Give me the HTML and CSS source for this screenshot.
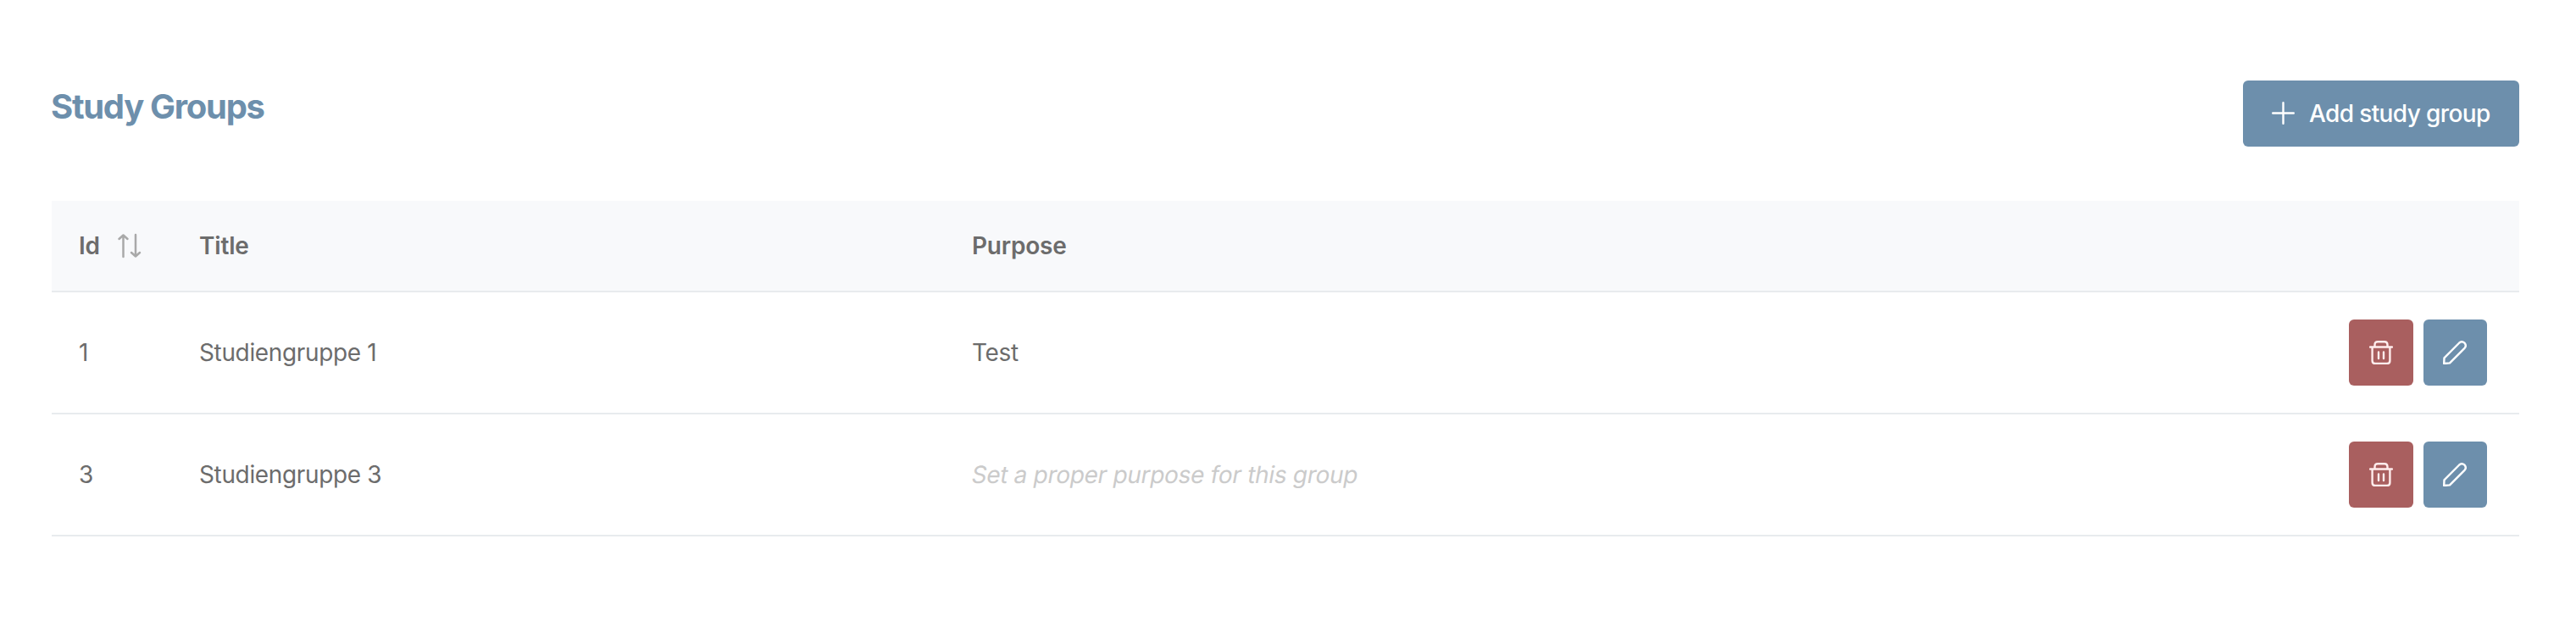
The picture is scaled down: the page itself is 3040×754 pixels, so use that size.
FILE: index.html
```html
<!DOCTYPE html>
<html lang="en">
<head>
<meta charset="utf-8">
<title>Study Groups</title>
<link rel="stylesheet" href="styles.css">
</head>
<body>
<svg class="sprite" width="0" height="0">
  <symbol id="trash" viewBox="0 0 28 28"><path d="M1 7.500H27M6.500 7.500V5Q6.500 1.200 10 1.200H18Q21.500 1.200 21.500 5V7.500M3.600 7.500V23.500Q3.600 27 7 27H21Q24.400 27 24.400 23.500V7.500M11 13.500V21M17 13.500V21"/></symbol>
  <symbol id="pencil" viewBox="0 0 28 28"><path d="M1.200 27L1.500 20.300L19.300 2.500Q22 0 25.200 2.400Q28.200 5.500 25.700 8.600L8 26.400Z"/></symbol>
</svg>
<main class="page">
  <header class="toolbar">
    <h1 class="title"><span>Study Groups</span></h1>
    <button class="button add"><svg class="icon plus" viewBox="0 0 28 28"><path d="M13.500 1.200V25.800M1.200 13.500H25.800"/></svg><span>Add study group</span></button>
  </header>
  <section class="table">
    <div class="row head">
      <div class="cell id"><span>Id</span><svg class="icon sort" viewBox="0 0 28 28"><path d="M6.500 27V1.500M1.500 6L6.500 1.500L11.500 6M21 1V26.500M16 22L21 26.500L26 22"/></svg></div>
      <div class="cell"><span>Title</span></div>
      <div class="cell"><span>Purpose</span></div>
      <div class="cell"></div>
    </div>
    <div class="row">
      <div class="cell"><span>1</span></div>
      <div class="cell"><span>Studiengruppe 1</span></div>
      <div class="cell"><span>Test</span></div>
      <div class="cell actions"><button class="button square danger" aria-label="Delete"><svg class="icon"><use href="#trash"/></svg></button><button class="button square edit" aria-label="Edit"><svg class="icon"><use href="#pencil"/></svg></button></div>
    </div>
    <div class="row">
      <div class="cell"><span>3</span></div>
      <div class="cell"><span>Studiengruppe 3</span></div>
      <div class="cell"><span class="placeholder">Set a proper purpose for this group</span></div>
      <div class="cell actions"><button class="button square danger" aria-label="Delete"><svg class="icon"><use href="#trash"/></svg></button><button class="button square edit" aria-label="Edit"><svg class="icon"><use href="#pencil"/></svg></button></div>
    </div>
  </section>
</main>
</body>
</html>
```
FILE: styles.css
```css
* { box-sizing: border-box; }
body { margin: 0; background: #fff; color: #6c6c6c; font: 430 28px/42px Inter, sans-serif; letter-spacing: -0.36px; }
.sprite { display: block; position: absolute; }
.page { padding: 95px 67px 0 61px; }
.toolbar { display: flex; justify-content: space-between; align-items: flex-start; height: 142px; }
.title { margin: 0 0 0 -1px; padding-top: 1px; font-size: 40px; line-height: 60px; font-weight: 660; color: #6d8fac; letter-spacing: -1.3px; }
.button { display: flex; align-items: center; border: 0; border-radius: 6px; height: 78px; padding: 0; color: #fff; background: #6d8fac; font: inherit; }
.add { width: 326px; padding-left: 34px; gap: 16px; font-weight: 500; white-space: nowrap; letter-spacing: -0.62px; }
.icon { width: 28px; height: 28px; flex: none; fill: none; stroke: currentColor; stroke-width: 2.4; stroke-linecap: round; stroke-linejoin: round; overflow: visible; }
.row { display: grid; grid-template-columns: 142px 913px 1fr 196px; align-items: center; height: 144px; border-bottom: 2px solid #e8ebee; }
.head { height: 108px; background: #f8f9fb; font-weight: 620; letter-spacing: -0.2px; }
.cell { display: flex; align-items: center; padding-left: 32px; white-space: nowrap; }
.cell:nth-child(3) { padding-left: 31px; }
.id { gap: 21px; }
.sort { color: #a9a9a9; stroke-width: 2.5; }
.placeholder { color: #cbcbcb; transform: skewX(-10deg); letter-spacing: -0.3px; }
.actions { gap: 12px; padding: 0; margin-left: -5px; }
.square { width: 76px; justify-content: center; }
.danger { background: #a95f5f; }
.danger .icon { color: #ffecec; }
.edit { width: 75px; }
.edit .icon { margin-left: -2px; }
```
